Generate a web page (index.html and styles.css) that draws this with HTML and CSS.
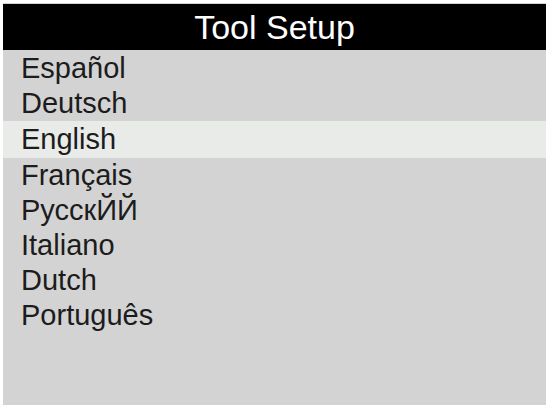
FILE: index.html
```html
<!DOCTYPE html>
<html>
<head>
<meta charset="utf-8">
<link rel="stylesheet" href="styles.css">
</head>
<body>
<div class="screen">
  <div class="title">Tool Setup</div>
  <ul class="menu">
    <li class="item">Español</li>
    <li class="item">Deutsch</li>
    <li class="item selected">English</li>
    <li class="item">Français</li>
    <li class="item">РусскЙЙ</li>
    <li class="item">Italiano</li>
    <li class="item">Dutch</li>
    <li class="item">Português</li>
  </ul>
</div>
</body>
</html>
```
FILE: styles.css
```css
html, body {
  margin: 0;
  padding: 0;
  background: #ffffff;
}
body {
  padding: 3px 4px 4px 3px;
  font-family: "Liberation Sans", Arial, sans-serif;
}
.screen {
  width: 543px;
  height: 402px;
  background: #d3d3d3;
  display: flex;
  flex-direction: column;
}
.title {
  height: 46px;
  margin-top: 1px;
  background: #000000;
  color: #ffffff;
  font-size: 34px;
  line-height: 46px;
  text-align: center;
}
.menu {
  list-style: none;
  margin: 0;
  padding: 1px 0 0 0;
}
.item {
  height: 35px;
  line-height: 35px;
  padding-left: 18px;
  font-size: 29px;
  color: #1c1c1c;
}
.selected {
  background: #e9ebe9;
  height: 37px;
  line-height: 37px;
}
```
